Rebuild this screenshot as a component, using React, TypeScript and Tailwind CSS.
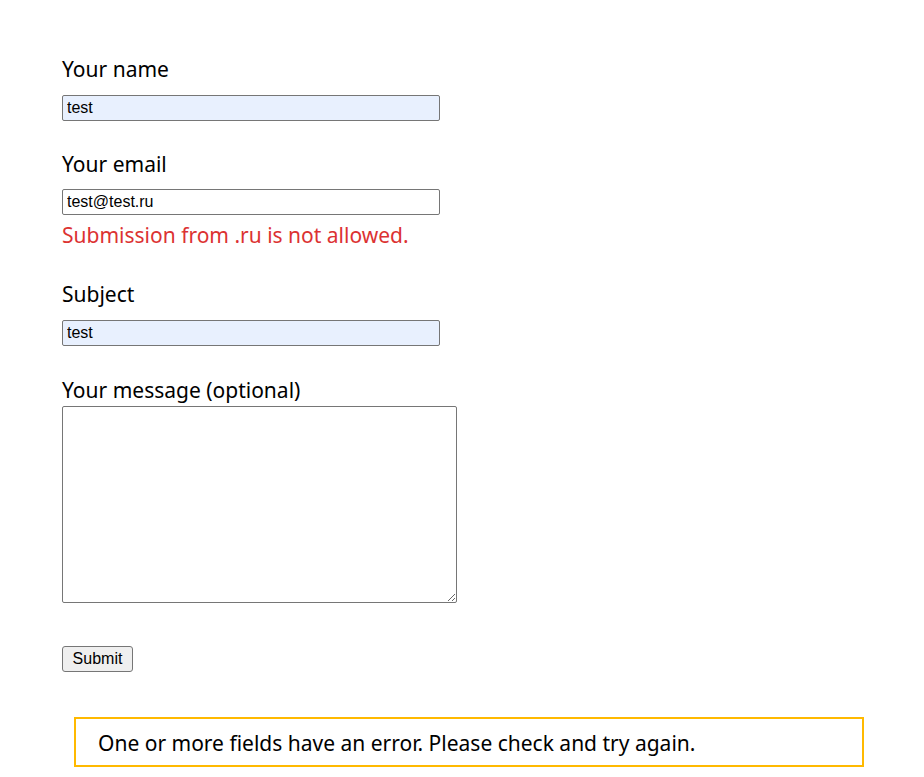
import React, { useState } from "react";

const labelCls =
  "block text-[21px] leading-[28px] text-black [font-family:'Noto_Sans',sans-serif]";
const inputCls =
  "block h-[26px] w-[378px] rounded-[2px] border border-[#767676] px-[4px] text-[16px] text-black outline-none [font-family:'Liberation_Sans',Arial,sans-serif]";

export default function App() {
  const [form, setForm] = useState({
    name: "test",
    email: "test@test.ru",
    subject: "test",
    message: "",
  });

  const set =
    (key: keyof typeof form) =>
    (e: React.ChangeEvent<HTMLInputElement | HTMLTextAreaElement>) =>
      setForm({ ...form, [key]: e.target.value });

  return (
    <div className="min-h-screen bg-white pl-[62px] pt-[55px] [font-family:'Noto_Sans',sans-serif]">
      <form className="flex flex-col items-start" onSubmit={(e) => e.preventDefault()}>
        <label className={labelCls}>Your name</label>
        <input
          value={form.name}
          onChange={set("name")}
          className={`${inputCls} mt-[12px] bg-[#e8f0fe]`}
        />

        <label className={`${labelCls} mt-[29px]`}>Your email</label>
        <input
          value={form.email}
          onChange={set("email")}
          className={`${inputCls} mt-[11px] bg-white`}
        />
        <span className="mt-[6px] block text-[21px] leading-[28px] text-[#dc3232]">
          Submission from .ru is not allowed.
        </span>

        <label className={`${labelCls} mt-[31px]`}>Subject</label>
        <input
          value={form.subject}
          onChange={set("subject")}
          className={`${inputCls} mt-[12px] bg-[#e8f0fe]`}
        />

        <label className={`${labelCls} mt-[30px]`}>Your message (optional)</label>
        <textarea
          value={form.message}
          onChange={set("message")}
          className="mt-[2px] block h-[197px] w-[395px] rounded-[2px] border border-[#767676] bg-white px-[3px] text-[16px] outline-none [font-family:'Liberation_Sans',Arial,sans-serif]"
        />

        <button
          type="submit"
          className="mt-[43px] h-[26px] w-[71px] rounded-[3px] border border-[#767676] bg-[#efefef] text-[16px] leading-none text-black [font-family:'Liberation_Sans',Arial,sans-serif]"
        >
          Submit
        </button>
      </form>

      <div className="ml-[12px] mt-[45px] w-[790px] border-2 border-[#ffb900] pl-[22px]">
        <p className="pt-[2px] text-[21px] leading-[44px] text-black">
          One or more fields have an error. Please check and try again.
        </p>
      </div>
    </div>
  );
}
